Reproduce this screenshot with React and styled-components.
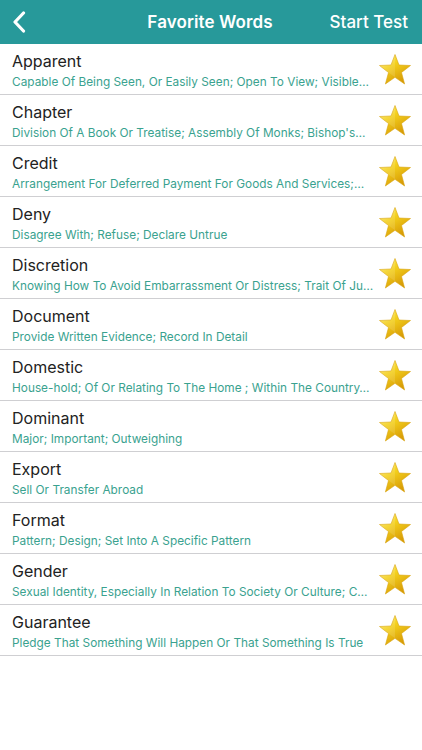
import React from "react";
import styled, { createGlobalStyle } from "styled-components";

const words = [
  ["Apparent", "Capable Of Being Seen, Or Easily Seen; Open To View; Visible…"],
  ["Chapter", "Division Of A Book Or Treatise; Assembly Of Monks; Bishop's…"],
  ["Credit", "Arrangement For Deferred Payment For Goods And Services;…"],
  ["Deny", "Disagree With; Refuse; Declare Untrue"],
  ["Discretion", "Knowing How To Avoid Embarrassment Or Distress; Trait Of Ju…"],
  ["Document", "Provide Written Evidence; Record In Detail"],
  ["Domestic", "House-hold; Of Or Relating To The Home ; Within The Country…"],
  ["Dominant", "Major; Important; Outweighing"],
  ["Export", "Sell Or Transfer Abroad"],
  ["Format", "Pattern; Design; Set Into A Specific Pattern"],
  ["Gender", "Sexual Identity, Especially In Relation To Society Or Culture; C…"],
  ["Guarantee", "Pledge That Something Will Happen Or That Something Is True"],
];

const GlobalStyle = createGlobalStyle`
  body {
    margin: 0;
    background: #fff;
    font-family: Inter, "Noto Sans", sans-serif;
  }
`;

const Screen = styled.div`
  width: 422px;
  min-height: 750px;
  background: #fff;
`;

const Header = styled.header`
  height: 44px;
  background: #27999a;
  display: grid;
  grid-template-columns: 1fr auto 1fr;
  align-items: center;
  color: #fff;
  padding: 0 14px 0 12px;
  box-sizing: border-box;
`;

const Back = styled.button`
  justify-self: start;
  background: none;
  border: 0;
  padding: 0;
  display: flex;
  color: #fff;
`;

const Title = styled.h1`
  margin: 0;
  font-size: 17px;
  font-weight: 600;
  letter-spacing: 0.1px;
`;

const Action = styled.button`
  justify-self: end;
  background: none;
  border: 0;
  padding: 0;
  color: #fff;
  font-family: inherit;
  font-size: 17px;
  font-weight: 500;
`;

const List = styled.ul`
  list-style: none;
  margin: 0;
  padding: 0;
`;

const Row = styled.li`
  height: 50px;
  border-bottom: 1px solid #cfcfd2;
  display: flex;
  align-items: center;
  padding: 0 12px;
  gap: 3px;
`;

const Text = styled.div`
  flex: 1;
  min-width: 0;
  display: flex;
  flex-direction: column;
  gap: 4px;
  margin-top: 2px;
`;

const Word = styled.span`
  font-size: 16px;
  color: #222;
  line-height: 20px;
`;

const Meaning = styled.span`
  font-size: 11.8px;
  color: #3aa28f;
  line-height: 15px;
  letter-spacing: 0.02px;
  white-space: nowrap;
  overflow: hidden;
  text-overflow: ellipsis;
`;

const Star = () => (
  <svg width="32" height="31" viewBox="0 0 32 31">
    <defs>
      <linearGradient id="sg" x1="0" y1="0" x2="0.6" y2="1">
        <stop offset="0" stopColor="#fff27a" />
        <stop offset="0.45" stopColor="#f3cf1c" />
        <stop offset="1" stopColor="#d79a06" />
      </linearGradient>
    </defs>
    <polygon
      points="16,0.5 20,11 31.5,11.5 22.5,18.5 25.6,30 16,23.3 6.4,30 9.5,18.5 0.5,11.5 12,11"
      fill="url(#sg)"
      stroke="#d9a20e"
      strokeWidth="0.6"
      strokeLinejoin="round"
    />
    <polygon points="16,0.5 16,23.3 9.5,18.5 0.5,11.5 12,11" fill="#fff" opacity="0.12" />
  </svg>
);

const Fav = styled.div`
  flex: none;
  display: flex;
  margin-right: -1px;
`;

export default function App() {
  return (
    <Screen>
      <GlobalStyle />
      <Header>
        <Back>
          <svg width="14" height="22" viewBox="0 0 14 22">
            <path d="M11.5 2 L3 11 L11.5 20" fill="none" stroke="#fff" strokeWidth="3.2" strokeLinecap="round" strokeLinejoin="round" />
          </svg>
        </Back>
        <Title>Favorite Words</Title>
        <Action>Start Test</Action>
      </Header>
      <List>
        {words.map(([w, m]) => (
          <Row key={w}>
            <Text>
              <Word>{w}</Word>
              <Meaning>{m}</Meaning>
            </Text>
            <Fav>
              <Star />
            </Fav>
          </Row>
        ))}
      </List>
    </Screen>
  );
}
